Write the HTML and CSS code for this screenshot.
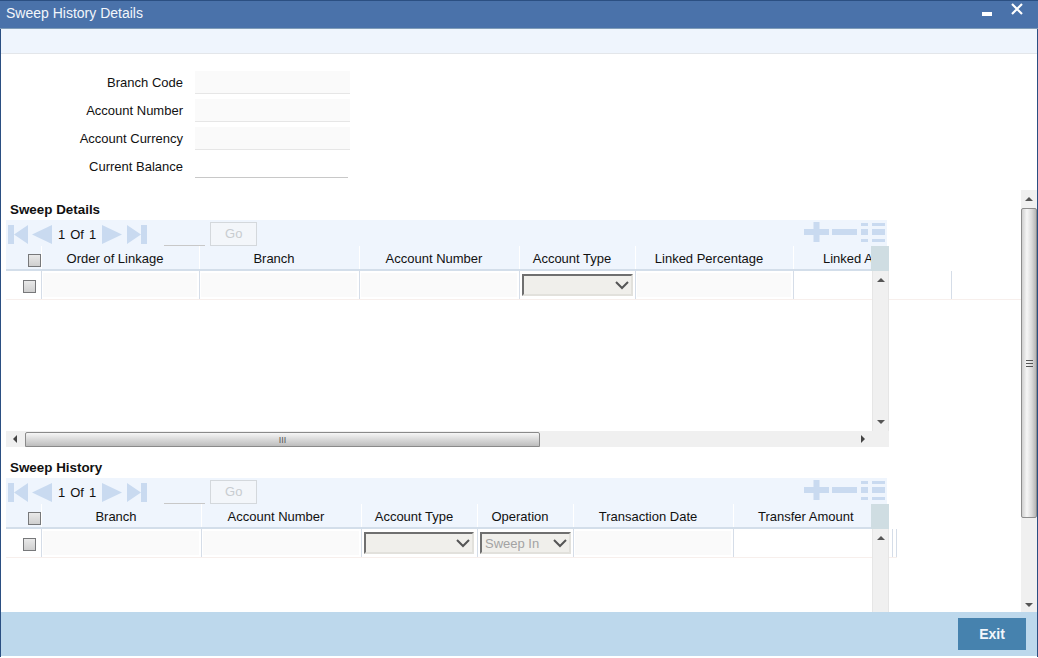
FILE: index.html
```html
<!DOCTYPE html>
<html lang="en">
<head>
<meta charset="utf-8">
<title>Sweep History Details</title>
<link rel="stylesheet" href="styles.css">
</head>
<body>
<svg class="defs" width="0" height="0" aria-hidden="true">
  <symbol id="first" viewBox="0 0 21 19" preserveAspectRatio="none"><path d="M0 0h6v19H0zM6 9.500 20 0v19z"/></symbol>
  <symbol id="prev" viewBox="0 0 21 19" preserveAspectRatio="none"><path d="M0 9.500 20 0v19z"/></symbol>
  <symbol id="next" viewBox="0 0 21 19" preserveAspectRatio="none"><path d="M0 0l20 9.500L0 19z"/></symbol>
  <symbol id="last" viewBox="0 0 21 19" preserveAspectRatio="none"><path d="M0 0l14 9.500L0 19zM14 0h6v19h-6z"/></symbol>
  <symbol id="plus" viewBox="0 0 25 20"><path d="M0 7h9.500V0h6v7H25v6h-9.500v7h-6v-7H0z"/></symbol>
  <symbol id="minus" viewBox="0 0 25 20"><path d="M0 7h25v6H0z"/></symbol>
  <symbol id="list" viewBox="0 0 25 20"><path d="M0 1h7v3H0zM11 1h13v3H11zM0 7h7v6H0zM11 7h13v6H11zM0 17h7v3H0zM11 17h13v3H11z"/></symbol>
  <symbol id="chev" viewBox="0 0 14 9"><path d="M1 1l6 6 6-6" fill="none" stroke="currentColor" stroke-width="2"/></symbol>
</svg>
<div class="window">
  <header class="titlebar">
    <h1 class="title">Sweep History Details</h1>
    <div class="win-ctrls">
      <span class="win-min"></span>
      <svg class="win-close" width="14" height="14" viewBox="0 0 14 14"><path d="M2 2l10 10M12 2 2 12" stroke="#fff" stroke-width="2.200" fill="none"/></svg>
    </div>
  </header>
  <div class="toolbar"></div>
  <form class="form">
    <div class="form-row"><label class="form-label">Branch Code</label><div class="field"></div></div>
    <div class="form-row"><label class="form-label">Account Number</label><div class="field"></div></div>
    <div class="form-row"><label class="form-label">Account Currency</label><div class="field"></div></div>
    <div class="form-row"><label class="form-label">Current Balance</label><div class="field field-plain"></div></div>
  </form>
  <div class="scroll-area">
    <div class="scroll-content">
      <section class="section section-a">
        <h2 class="section-title">Sweep Details</h2>
        <div class="pager">
          <svg class="pg pg-first"><use href="#first"/></svg>
          <svg class="pg pg-prev"><use href="#prev"/></svg>
          <span class="pg-text">1</span><span class="pg-text">Of</span><span class="pg-text">1</span>
          <svg class="pg pg-next"><use href="#next"/></svg>
          <svg class="pg pg-last"><use href="#last"/></svg>
          <span class="pg-input"></span>
          <span class="pg-go">Go</span>
          <span class="pg-tools">
            <svg class="tool"><use href="#plus"/></svg>
            <svg class="tool"><use href="#minus"/></svg>
            <svg class="tool tool-list"><use href="#list"/></svg>
          </span>
        </div>
        <div class="grid-wrap grid-wrap-a">
          <div class="grid-row grid-head cols-a">
            <div class="cell cell-check"><span class="check check-head"></span></div>
            <div class="cell">Order of Linkage</div>
            <div class="cell">Branch</div>
            <div class="cell">Account Number</div>
            <div class="cell">Account Type</div>
            <div class="cell">Linked Percentage</div>
            <div class="cell cell-clip">Linked Amount</div>
          </div>
          <div class="grid-row grid-body cols-a">
            <div class="cell cell-check"><span class="check"></span></div>
            <div class="cell cell-in"></div>
            <div class="cell cell-in"></div>
            <div class="cell cell-in"></div>
            <div class="cell cell-sel"><div class="select select-a"><span></span><svg class="chev"><use href="#chev"/></svg></div></div>
            <div class="cell cell-in"></div>
            <div class="cell"></div>
            <div class="cell cell-end"></div>
          </div>
          <div class="head-corner"></div>
          <div class="vbar vbar-a"><span class="arrow arrow-up"></span><span class="arrow arrow-down"></span></div>
          <div class="hbar">
            <span class="arrow arrow-left"></span>
            <div class="hthumb"><span class="hgrip">III</span></div>
            <span class="arrow arrow-right"></span>
          </div>
        </div>
      </section>
      <section class="section section-b">
        <h2 class="section-title">Sweep History</h2>
        <div class="pager">
          <svg class="pg pg-first"><use href="#first"/></svg>
          <svg class="pg pg-prev"><use href="#prev"/></svg>
          <span class="pg-text">1</span><span class="pg-text">Of</span><span class="pg-text">1</span>
          <svg class="pg pg-next"><use href="#next"/></svg>
          <svg class="pg pg-last"><use href="#last"/></svg>
          <span class="pg-input"></span>
          <span class="pg-go">Go</span>
          <span class="pg-tools">
            <svg class="tool"><use href="#plus"/></svg>
            <svg class="tool"><use href="#minus"/></svg>
            <svg class="tool tool-list"><use href="#list"/></svg>
          </span>
        </div>
        <div class="grid-wrap grid-wrap-b">
          <div class="grid-row grid-head cols-b">
            <div class="cell cell-check"><span class="check check-head"></span></div>
            <div class="cell">Branch</div>
            <div class="cell">Account Number</div>
            <div class="cell">Account Type</div>
            <div class="cell">Operation</div>
            <div class="cell">Transaction Date</div>
            <div class="cell cell-clip">Transfer Amount</div>
          </div>
          <div class="grid-row grid-body cols-b">
            <div class="cell cell-check"><span class="check"></span></div>
            <div class="cell cell-in"></div>
            <div class="cell cell-in"></div>
            <div class="cell cell-sel"><div class="select select-b"><span></span><svg class="chev"><use href="#chev"/></svg></div></div>
            <div class="cell cell-sel"><div class="select select-c"><span>Sweep In</span><svg class="chev"><use href="#chev"/></svg></div></div>
            <div class="cell cell-in"></div>
            <div class="cell"></div>
            <div class="cell"></div>
          </div>
          <div class="head-corner"></div>
          <div class="vbar vbar-b"><span class="arrow arrow-up"></span></div>
        </div>
      </section>
    </div>
    <div class="page-scroll">
      <span class="arrow arrow-up"></span>
      <div class="vthumb"><span class="vgrip"></span></div>
      <span class="arrow arrow-down"></span>
    </div>
  </div>
  <footer class="footer"><button class="exit" type="button">Exit</button></footer>
</div>
</body>
</html>
```
FILE: styles.css
```css
* { box-sizing: border-box; }
html, body { margin: 0; padding: 0; height: 100%; background: #fff; overflow: hidden; }
body { font-family: "Liberation Sans", Arial, sans-serif; font-size: 13px; color: #111; }
.defs { display: block; height: 0; }

.window {
  width: 1038px; height: 657px; padding-bottom: 1px; display: flex; flex-direction: column;
  border-left: 1px solid #2b4f82; border-right: 1px solid #2b4f82;
}
.titlebar {
  height: 29px; flex: none; margin: 0 -1px; padding: 0 14px 0 6px;
  background: #4a72aa; border-top: 1px solid #2b4f82; border-bottom: 1px solid #7f9cb8;
  display: flex; align-items: center; justify-content: space-between;
}
.title { margin: 0 0 3px; font-size: 14px; font-weight: 400; color: #f2f6fb; }
.win-ctrls { display: flex; align-items: flex-start; gap: 18px; height: 100%; }
.win-min { width: 10px; height: 4px; background: #fff; margin-top: 11px; }
.win-close { margin-top: 1px; }
.toolbar { height: 25px; flex: none; background: #eff5fd; border-bottom: 1px solid #e3e6ea; }

.form { height: 136px; flex: none; padding-top: 17px; display: flex; flex-direction: column; gap: 5px; }
.form-row { display: flex; height: 23px; }
.form-label { width: 182px; text-align: right; line-height: 24px; font-size: 13px; }
.field { width: 155px; margin-left: 12px; background: #fafafa; border-bottom: 1px solid #e6e6e6; }
.field-plain { background: #fff; width: 153px; border-bottom: 1px solid #c8c8c8; }

.scroll-area { flex: 1; min-height: 0; display: flex; overflow: hidden; }
.scroll-content { flex: 1; min-width: 0; overflow: hidden; padding-left: 5px; }
.section-title { margin: 0; height: 16px; padding-left: 4px; font-size: 13.400px; line-height: 16px; font-weight: 700; color: #111; }
.section-a { padding-top: 12px; }
.section-b { padding-top: 13px; }

.pager {
  width: 881px; height: 26px; margin-top: 2px; background: #eff5fd;
  display: flex; align-items: flex-start; padding: 2px 0 0 2px; fill: #c9daf0;
}
.pg { width: 21px; height: 19px; flex: none; margin-top: 3px; }
.pg-prev { margin-left: 3px; }
.pg-text { margin-left: 5px; font-size: 13px; line-height: 24px; padding-top: 1px; }
.pg-next { margin-left: 6px; }
.pg-last { margin-left: 4px; }
.pg-input { width: 41px; height: 24px; margin-left: 16px; border-bottom: 1px solid #c8c8c8; }
.pg-go {
  width: 47px; height: 24px; margin-left: 5px; background: #f3f6fa; border: 1px solid #d4d8dc;
  color: #c8ccd0; text-align: center; line-height: 22px; font-size: 13px;
}
.pg-tools { margin-left: auto; margin-right: 1px; display: flex; gap: 3px; }
.tool { width: 25px; height: 20px; }
.tool-list { margin-left: 1px; }

.grid-wrap { position: relative; width: 1015px; }
.grid-wrap-a { height: 201px; }
.grid-wrap-b { height: 108px; width: 891px; }
.grid-row { display: grid; }
.cols-a { grid-template-columns: 36px 158px 160px 160px 116px 158px 158px 64px; }
.cols-b { grid-template-columns: 36px 160px 160px 116px 96px 160px 159px 4px; }
.grid-head { height: 25px; background: #eff5fd; border-bottom: 2px solid #d3deea; width: 883px; overflow: hidden; }
.grid-body { height: 29px; border-bottom: 1px solid #f7efec; }
.cell {
  border-right: 1px solid #d5dde8; text-align: center; white-space: nowrap; overflow: hidden;
  font-size: 13px; min-width: 0;
}
.grid-head .cell { border-right-color: #fff; line-height: 25px; padding-right: 11px; }
.grid-head .cell-clip { text-align: left; padding: 0 0 0 29px; }
.grid-wrap-b .grid-head .cell-clip { padding-left: 24px; }
.grid-head .cell-check { padding: 0; }
.cell-end { border-right: 0; }
.cell-check { position: relative; }
.check {
  position: absolute; width: 13px; height: 13px; border: 1px solid #77787a;
  background: linear-gradient(#e9e9e9, #cfcfcf); top: 9px; left: 17px;
}
.check-head { left: 22px; top: 8px; }
.cell-in { padding: 2px 2px 2px 1px; background: #fafafa content-box; }
.cell-sel { padding: 3px 2px 0; }
.select {
  height: 22px; display: flex; align-items: center; justify-content: space-between; padding: 0 2px 0 3px;
  background: #f0efeb; border: 2px solid; border-color: #6f6f6f #e2e1dc #e2e1dc #6f6f6f;
  color: #a3a3a3; font-size: 13px; line-height: 20px;
}
.select span { padding-top: 1px; }
.select-a { width: 111px; }
.select-b { width: 110px; }
.select-c { width: 91px; }
.chev { width: 14px; height: 9px; color: #555; flex: none; }

.head-corner { position: absolute; left: 865px; top: 0; width: 18px; height: 25px; background: #cfdde2; }
.vbar {
  position: absolute; left: 866px; top: 25px; width: 17px; background: #f0f0f0;
  border-left: 1px solid #e6e6e6; border-right: 1px solid #e6e6e6;
  display: flex; flex-direction: column; align-items: center; justify-content: space-between; padding: 7px 0;
}
.vbar-a { height: 160px; }
.vbar-b { height: 83px; }
.hbar {
  position: absolute; left: 0; top: 185px; width: 883px; height: 16px; background: #f0f0f0;
  display: flex; align-items: center; padding: 0 24px 0 7px;
}
.hthumb {
  width: 515px; height: 15px; margin-left: 8px; border: 1px solid #8a8a8a; border-radius: 2px 2px 0 0;
  background: linear-gradient(#f6f6f6, #dcdcdc 45%, #bdbdbd); text-align: center; line-height: 12px;
}
.hgrip { font-size: 9px; color: #555; }
.hbar .arrow-right { margin-left: auto; }

.arrow { width: 0; height: 0; display: block; flex: none; border-style: solid; border-color: transparent; }
.arrow-up { border-width: 0 4px 4px; border-bottom-color: #555; }
.arrow-down { border-width: 4px 4px 0; border-top-color: #555; }
.arrow-left { border-width: 4px 4px 4px 0; border-right-color: #444; }
.arrow-right { border-width: 4px 0 4px 4px; border-left-color: #444; }

.page-scroll {
  width: 16px; flex: none; background: #f0f0f0; display: flex; flex-direction: column; align-items: center;
  padding: 7px 0 5px;
}
.vthumb {
  width: 16px; height: 310px; margin: 7px 0 auto; border: 1px solid #8d8d8d; border-radius: 2px;
  background: linear-gradient(90deg, #cfcfcf, #f6f6f6 35%, #dadada 70%, #b5b5b5);
  display: flex; align-items: center; justify-content: center;
}
.vgrip { width: 7px; height: 7px; background: repeating-linear-gradient(#555 0 1px, transparent 1px 3px); }

.footer {
  height: 44px; flex: none; background: #bdd8ec;
  display: flex; align-items: center; justify-content: flex-end; padding-right: 11px;
}
.exit {
  width: 68px; height: 32px; border: 0; padding: 0; background: #4682ae; color: #f2f7fb;
  font-family: inherit; font-size: 14px; font-weight: 700;
}
```
